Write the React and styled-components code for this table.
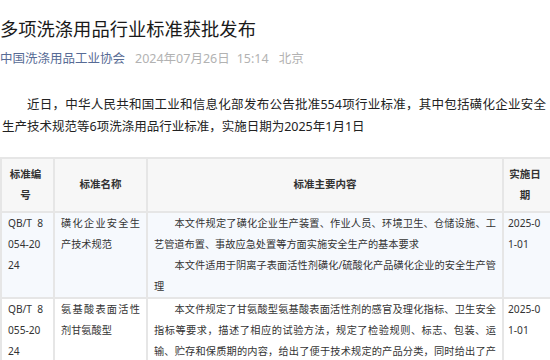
import React from "react";
import styled, { createGlobalStyle } from "styled-components";

const GlobalStyle = createGlobalStyle`
  body {
    margin: 0;
    background: #fff;
    font-family: "Noto Sans", "Noto Sans CJK SC", sans-serif;
  }
`;

const standards = [
  {
    code: "QB/T 8054-2024",
    name: "磺化企业安全生产技术规范",
    content: [
      "本文件规定了磺化企业生产装置、作业人员、环境卫生、仓储设施、工艺管道布置、事故应急处置等方面实施安全生产的基本要求",
      "本文件适用于阴离子表面活性剂磺化/硫酸化产品磺化企业的安全生产管理",
    ],
    date: "2025-01-01",
    tint: true,
  },
  {
    code: "QB/T 8055-2024",
    name: "氨基酸表面活性剂甘氨酸型",
    content: [
      "本文件规定了甘氨酸型氨基酸表面活性剂的感官及理化指标、卫生安全指标等要求，描述了相应的试验方法，规定了检验规则、标志、包装、运输、贮存和保质期的内容，给出了便于技术规定的产品分类，同时给出了产品的主要成分及含量要求",
    ],
    date: "2025-01-01",
    tint: false,
  },
];

const Article = () => {
  return (
    <Page>
      <GlobalStyle />
      <Title>多项洗涤用品行业标准获批发布</Title>
      <Meta>
        <Author>中国洗涤用品工业协会</Author>
        <Stamp $gap={10}>2024年07月26日</Stamp>
        <Stamp $gap={7}>15:14</Stamp>
        <Stamp $gap={10}>北京</Stamp>
      </Meta>
      <Lead>
        近日，中华人民共和国工业和信息化部发布公告批准554项行业标准，其中包括磺化企业安全生产技术规范等6项洗涤用品行业标准，实施日期为2025年1月1日
      </Lead>
      <Table>
        <colgroup>
          <Col $w={53} />
          <Col $w={93} />
          <Col $w={356} />
          <Col $w={48} />
        </colgroup>
        <thead>
          <tr>
            <Head $pr={10}>标准编号</Head>
            <Head>标准名称</Head>
            <Head>标准主要内容</Head>
            <Head $pl={4} $pr={8}>实施日期</Head>
          </tr>
        </thead>
        <tbody>
          {standards.map((s) => (
            <Row key={s.code} $tint={s.tint}>
              <Cell $pr={10}>{s.code}</Cell>
              <Cell>{s.name}</Cell>
              <Cell>
                {s.content.map((c, i) => (
                  <Para key={i}>{c}</Para>
                ))}
              </Cell>
              <Cell $pl={4} $pr={8}>{s.date}</Cell>
            </Row>
          ))}
        </tbody>
      </Table>
    </Page>
  );
};

const Page = styled.div`
  width: 550px;
  padding-top: 16px;
`;

const Title = styled.h1`
  margin: 0 0 7px;
  font-size: 18.3px;
  line-height: 1.4;
  font-weight: 400;
  color: #1a1a1a;
`;

const Meta = styled.div`
  display: flex;
  align-items: center;
  font-size: 12.5px;
  line-height: 20px;
  white-space: nowrap;
`;

const Author = styled.span`
  color: #576b95;
`;

const Stamp = styled.span`
  margin-left: ${(p) => p.$gap}px;
  color: #b2b2b2;
`;

const Lead = styled.p`
  margin: 25px 0 19px;
  padding: 0 4px 0 2px;
  font-size: 12.5px;
  line-height: 22px;
  text-indent: 2em;
  text-align: justify;
  color: #222;
`;

const Table = styled.table`
  width: 550px;
  table-layout: fixed;
  border-collapse: collapse;
  font-size: 10.2px;
  line-height: 21px;
  color: #333;
`;

const Col = styled.col`
  width: ${(p) => p.$w}px;
`;

const Head = styled.th`
  padding: 5px ${(p) => p.$pr || 6}px 5px ${(p) => p.$pl || 6}px;
  border: 2px solid #e6e6e6;
  background: #f7f7f7;
  font-size: 10.5px;
  font-weight: 700;
  text-align: center;
  vertical-align: middle;
  word-break: break-all;
`;

const Row = styled.tr`
  background: ${(p) => (p.$tint ? "#f6f9fd" : "#fff")};
`;

const Cell = styled.td`
  padding: 0 ${(p) => p.$pr || 6}px 0 ${(p) => p.$pl || 6}px;
  border: 2px solid #e6e6e6;
  vertical-align: top;
  text-align: justify;
  word-break: break-all;
`;

const Para = styled.p`
  margin: 0;
  text-indent: 2em;
`;

export default Article;
